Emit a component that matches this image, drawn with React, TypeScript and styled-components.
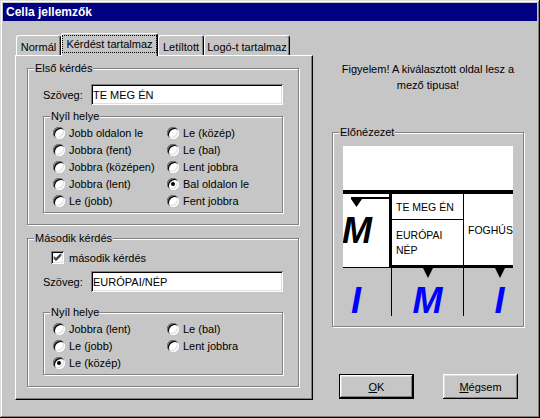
import React from 'react';
import styled, { createGlobalStyle } from 'styled-components';

const FACE = '#c6c6c6';
const SHADOW = '#808080';
const LIGHT = '#dfdfdf';

const firstOptions = [
    'Jobb oldalon le', 'Le (közép)',
    'Jobbra (fent)', 'Le (bal)',
    'Jobbra (középen)', 'Lent jobbra',
    'Jobbra (lent)', 'Bal oldalon le',
    'Le (jobb)', 'Fent jobbra',
]

const secondOptions = [
    'Jobbra (lent)', 'Le (bal)',
    'Le (jobb)', 'Lent jobbra',
    'Le (közép)',
]

const tabs = [
    { label: 'Normál', width: 45 },
    { label: 'Kérdést tartalmaz', width: 97, active: true },
    { label: 'Letíltott', width: 46 },
    { label: 'Logó-t tartalmaz', width: 86 },
]

const ArrowSelector: React.FC<{ options: string[]; checked: string }> = ({ options, checked }) => (
    <GroupBox>
        <Legend>Nyíl helye</Legend>
        <OptionGrid>
            {options.map(opt => (
                <Option key={opt}>
                    <Radio $checked={opt === checked} />
                    <span>{opt}</span>
                </Option>
            ))}
        </OptionGrid>
    </GroupBox>
)

const App: React.FC = () => {
    return (
        <Window>
            <GlobalStyles />
            <TitleBar>Cella jellemzők</TitleBar>
            <Body>
                <TabControl>
                    <TabStrip>
                        {tabs.map(t => (
                            <Tab key={t.label} $w={t.width} $active={t.active}>
                                {t.active ? <Focus>{t.label}</Focus> : t.label}
                            </Tab>
                        ))}
                    </TabStrip>
                    <TabPanel>
                        <GroupBox>
                            <Legend>Első kérdés</Legend>
                            <GroupInner $pad='9px 15px 11px'>
                                <FieldRow>
                                    <FieldLabel>Szöveg:</FieldLabel>
                                    <TextBox readOnly value='TE MEG ÉN' />
                                </FieldRow>
                                <Spacer $h={5} />
                                <ArrowSelector options={firstOptions} checked='Bal oldalon le' />
                            </GroupInner>
                        </GroupBox>
                        <Spacer $h={7} />
                        <GroupBox>
                            <Legend>Második kérdés</Legend>
                            <GroupInner $pad='4px 15px 11px'>
                                <CheckRow>
                                    <CheckBox>
                                        <svg width='13' height='13' viewBox='0 0 13 13'>
                                            <path d='M3 5.5 L5 7.5 L10 2.5 M3 6.5 L5 8.5 L10 3.5 M3 7.5 L5 9.5 L10 4.5' stroke='#000' strokeWidth='1' fill='none' />
                                        </svg>
                                    </CheckBox>
                                    <span>második kérdés</span>
                                </CheckRow>
                                <Spacer $h={5} />
                                <FieldRow>
                                    <FieldLabel>Szöveg:</FieldLabel>
                                    <TextBox readOnly value='EURÓPAI/NÉP' />
                                </FieldRow>
                                <Spacer $h={14} />
                                <ArrowSelector options={secondOptions} checked='Le (közép)' />
                            </GroupInner>
                        </GroupBox>
                    </TabPanel>
                </TabControl>

                <SideColumn>
                    <Message>
                        Figyelem! A kiválasztott oldal lesz a<br />mező tipusa!
                    </Message>
                    <Spacer $h={33} />
                    <GroupBox>
                        <Legend>Előnézezet</Legend>
                        <GroupInner $pad='7px 10px 10px'>
                            <Preview>
                                <Sheet>
                                    <SheetMargin />
                                    <HeavyRule />
                                    <CellRow>
                                        <EntryCell>
                                            <svg width='68' height='14' viewBox='0 0 68 14'>
                                                <rect x='30' y='3' width='38' height='2' fill='#000' />
                                                <polygon points='30,5 41,5 35.5,13' fill='#000' />
                                            </svg>
                                            <BigLetter $color='#000' $shift={4}>M</BigLetter>
                                        </EntryCell>
                                        <ClueBlock>
                                            <ClueCell>
                                                <ClueTop>TE MEG ÉN</ClueTop>
                                                <ClueBottom>EURÓPAI<br />NÉP</ClueBottom>
                                            </ClueCell>
                                            <ClueSide>FOGHÚS</ClueSide>
                                        </ClueBlock>
                                    </CellRow>
                                    <GrayRow>
                                        <GrayCell $w={71}>
                                            <Marker $hidden />
                                            <BigLetter $color='#0000ff'>I</BigLetter>
                                        </GrayCell>
                                        <GrayCell $w={72}>
                                            <Marker />
                                            <BigLetter $color='#0000ff'>M</BigLetter>
                                        </GrayCell>
                                        <GrayCell $w={71}>
                                            <Marker />
                                            <BigLetter $color='#0000ff'>I</BigLetter>
                                        </GrayCell>
                                    </GrayRow>
                                </Sheet>
                            </Preview>
                        </GroupInner>
                    </GroupBox>
                    <Spacer $h={47} />
                    <ButtonRow>
                        <Button $default><u>O</u>K</Button>
                        <Button><u>M</u>égsem</Button>
                    </ButtonRow>
                </SideColumn>
            </Body>
        </Window>
    );
}

export default App;

const GlobalStyles = createGlobalStyle`
    html, body {
        margin     : 0;
        padding    : 0;
        background : ${FACE};
    }
    body {
        font-family : "Liberation Sans", Arial, sans-serif;
        font-size   : 11px;
        color       : #000;
    }
    * {
        box-sizing : border-box;
    }
`

const Window = styled.div`
    width          : 540px;
    height         : 418px;
    padding        : 3px;
    background     : ${FACE};
    display        : flex;
    flex-direction : column;
    box-shadow     : inset -1px -1px 0 #000, inset 1px 1px 0 ${LIGHT},
                     inset -2px -2px 0 ${SHADOW}, inset 2px 2px 0 #fff;
`

const TitleBar = styled.div`
    height       : 18px;
    flex-shrink  : 0;
    display      : flex;
    align-items  : center;
    padding-left : 3px;
    background   : #000080;
    color        : #fff;
    font-weight  : bold;
    font-size    : 12px;
`

const Body = styled.div`
    display : flex;
    gap     : 19px;
    padding : 12px 0 0 12px;
`

const TabControl = styled.div`
    width : 298px;
`

const TabStrip = styled.div`
    display      : flex;
    align-items  : flex-end;
    height       : 22px;
    padding-left : 1px;
`

const Tab = styled.div<{ $w: number; $active?: boolean }>`
    position        : relative;
    z-index         : ${p => (p.$active ? 1 : 0)};
    width           : ${p => p.$w}px;
    height          : ${p => (p.$active ? 23 : 20)}px;
    margin-bottom   : ${p => (p.$active ? -1 : 0)}px;
    padding-top     : ${p => (p.$active ? 0 : 2)}px;
    padding-bottom  : ${p => (p.$active ? 3 : 0)}px;
    display         : flex;
    align-items     : center;
    justify-content : center;
    background      : ${FACE};
    border-left     : 1px solid #fff;
    border-top      : 1px solid #fff;
    border-right    : 1px solid #000;
    border-radius   : 3px 3px 0 0;
    box-shadow      : inset -1px 0 0 ${SHADOW};
    white-space     : nowrap;
`

const Focus = styled.span`
    border      : 1px dotted #000;
    padding     : 0 3px;
    line-height : 16px;
`

const TabPanel = styled.div`
    height        : 345px;
    padding       : 6px 13px 0 11px;
    border-left   : 1px solid #fff;
    border-top    : 1px solid #fff;
    border-right  : 1px solid #000;
    border-bottom : 1px solid #000;
    box-shadow    : inset -1px -1px 0 ${SHADOW};
`

const GroupBox = styled.fieldset`
    margin     : 0;
    padding    : 0;
    min-width  : 0;
    border     : 1px solid ${SHADOW};
    box-shadow : 1px 1px 0 #fff, inset 1px 1px 0 #fff;
`

const Legend = styled.legend`
    margin-left : 6px;
    padding     : 0 1px;
    line-height : 13px;
    font-size   : 11px;
    background  : ${FACE};
`

const GroupInner = styled.div<{ $pad: string }>`
    padding : ${p => p.$pad};
`

const Spacer = styled.div<{ $h: number }>`
    height : ${p => p.$h}px;
`

const FieldRow = styled.div`
    display     : flex;
    align-items : center;
    height      : 21px;
`

const FieldLabel = styled.span`
    width : 48px;
`

const TextBox = styled.input`
    flex         : 1;
    min-width    : 0;
    height       : 21px;
    padding      : 0 0 0 2px;
    border       : 0;
    outline      : none;
    background   : #fff;
    font         : inherit;
    color        : #000;
    box-shadow   : inset 1px 1px 0 ${SHADOW}, inset -1px -1px 0 #fff,
                   inset 2px 2px 0 #000, inset -2px -2px 0 ${LIGHT};
`

const OptionGrid = styled.div`
    display               : grid;
    grid-template-columns : 114px 1fr;
    grid-auto-rows        : 17px;
    padding               : 1px 0 3px 9px;
`

const Option = styled.label`
    display     : flex;
    align-items : center;
    gap         : 4px;
    white-space : nowrap;
`

const Radio = styled.span<{ $checked?: boolean }>`
    position        : relative;
    width           : 12px;
    height          : 12px;
    flex-shrink     : 0;
    border-radius   : 50%;
    background      : #fff;
    box-shadow      : inset 1px 1px 0 ${SHADOW}, inset -1px -1px 0 #fff,
                      inset 2px 2px 0 #000, inset -2px -2px 0 ${LIGHT};
    display         : flex;
    align-items     : center;
    justify-content : center;

    &::after {
        content       : '';
        width         : 4px;
        height        : 4px;
        border-radius : 50%;
        background    : ${p => (p.$checked ? '#000' : 'transparent')};
    }
`

const CheckRow = styled.label`
    display      : flex;
    align-items  : center;
    gap          : 5px;
    height       : 17px;
    padding-left : 8px;
`

const CheckBox = styled.span`
    width       : 13px;
    height      : 13px;
    flex-shrink : 0;
    background  : #fff;
    box-shadow  : inset 1px 1px 0 ${SHADOW}, inset -1px -1px 0 #fff,
                  inset 2px 2px 0 #000, inset -2px -2px 0 ${LIGHT};

    svg {
        display : block;
    }
`

const SideColumn = styled.div`
    width          : 192px;
    display        : flex;
    flex-direction : column;
`

const Message = styled.p`
    margin      : 28px 0 0;
    line-height : 16px;
    text-align  : center;
`

const Preview = styled.div`
    width      : 170px;
    height     : 170px;
    overflow   : hidden;
    background : #fff;
`

const Sheet = styled.div`
    width       : 214px;
    margin-left : -22px;
    font-size   : 10.5px;
`

const SheetMargin = styled.div`
    height : 44px;
`

const HeavyRule = styled.div`
    height     : 4px;
    background : #000;
`

const CellRow = styled.div`
    display : flex;
    height  : 74px;
`

const EntryCell = styled.div`
    width          : 68px;
    display        : flex;
    flex-direction : column;
    align-items    : center;
    border-bottom  : 1px solid #000;

    svg {
        display     : block;
        flex-shrink : 0;
    }
`

const ClueBlock = styled.div`
    display       : flex;
    border-left   : 3px solid #000;
    border-bottom : 3px solid #000;
`

const ClueCell = styled.div`
    width          : 71px;
    display        : flex;
    flex-direction : column;
`

const ClueTop = styled.div`
    height        : 26px;
    display       : flex;
    align-items   : center;
    padding-left  : 4px;
    border-bottom : 1px solid #000;
`

const ClueBottom = styled.div`
    flex         : 1;
    display      : flex;
    align-items  : center;
    padding-left : 4px;
    line-height  : 15px;
`

const ClueSide = styled.div`
    width        : 72px;
    display      : flex;
    align-items  : center;
    padding-left : 4px;
    border-left  : 1px solid #000;
`

const GrayRow = styled.div`
    display    : flex;
    height     : 48px;
    background : ${FACE};
`

const GrayCell = styled.div<{ $w: number }>`
    width          : ${p => p.$w}px;
    display        : flex;
    flex-direction : column;
    align-items    : center;

    &:not(:last-child) {
        border-right : 1px solid #000;
    }
`

const Marker = styled.span<{ $hidden?: boolean }>`
    width        : 0;
    height       : 0;
    flex-shrink  : 0;
    border-left  : 5.5px solid transparent;
    border-right : 5.5px solid transparent;
    border-top   : 10px solid ${p => (p.$hidden ? 'transparent' : '#000')};
`

const BigLetter = styled.span<{ $color: string; $shift?: number }>`
    margin-top  : 9px;
    margin-left : ${p => p.$shift ?? 0}px;
    font-size   : 36px;
    line-height : 27px;
    font-weight : bold;
    font-style  : italic;
    color       : ${p => p.$color};
`

const ButtonRow = styled.div`
    display      : flex;
    gap          : 29px;
    padding-left : 7px;
`

const Button = styled.button<{ $default?: boolean }>`
    width      : 75px;
    height     : 25px;
    padding    : 0;
    font       : inherit;
    color      : #000;
    background : ${FACE};
    border     : ${p => (p.$default ? '1px solid #000' : 'none')};
    box-shadow : inset -1px -1px 0 #000, inset 1px 1px 0 #fff,
                 inset -2px -2px 0 ${SHADOW}, inset 2px 2px 0 ${LIGHT};
`
